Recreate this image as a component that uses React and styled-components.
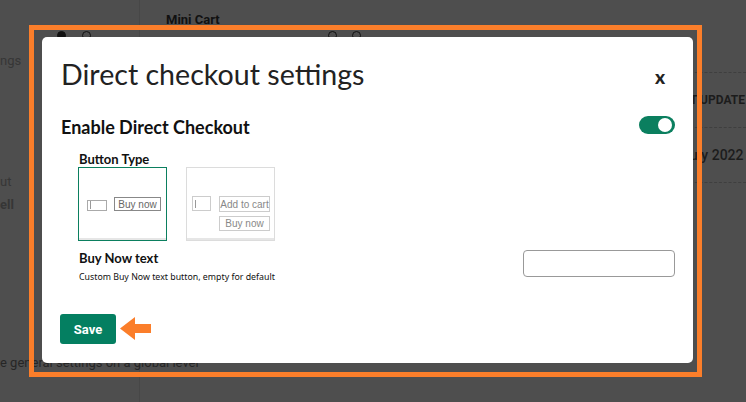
import styled, { createGlobalStyle } from 'styled-components'

const GlobalStyle = createGlobalStyle`
  html, body {
    margin: 0;
    padding: 0;
    background: #4e4e4e;
    overflow: hidden;
  }
  * { box-sizing: border-box; }
`

const Underlay = styled.div`
  display: grid;
  grid-template-columns: 140px 1fr 56px;
  height: 402px;
  width: 746px;
  font-family: Roboto, "Liberation Sans", sans-serif;
  color: #2a2a2a;
`

const LeftCol = styled.div`
  display: flex;
  flex-direction: column;
  padding-top: 31px;
  font-size: 13px;
  color: #333;
  border-right: 1px solid #474747;
`

const CutText = styled.div`
  margin-top: ${props => props.$top || 0}px;
  white-space: nowrap;
  font-weight: ${props => (props.$bold ? 700 : 400)};
  color: ${props => (props.$dark ? '#262626' : '#363636')};
`

const MidCol = styled.div`
  padding: 12px 0 0 26px;
`

const CartTitle = styled.div`
  font-size: 13px;
  font-weight: 700;
  color: #111;
`

const DotRow = styled.div`
  display: flex;
  gap: ${props => props.$gap}px;
  margin: ${props => props.$top}px 0 0 ${props => props.$left}px;
`

const Dot = styled.span`
  width: 9px;
  height: 9px;
  border-radius: 50%;
  border: 1.5px solid #111;
  background: ${props => (props.$filled ? '#111' : 'transparent')};
`

const RightCol = styled.div`
  display: flex;
  flex-direction: column;
  padding-top: 72px;
  overflow: hidden;
`

const DashedRow = styled.div`
  border-top: 1px dashed #3f3f3f;
  height: 55px;
  display: flex;
  align-items: center;
  font-size: ${props => props.$size || 12}px;
  font-weight: ${props => props.$weight || 700};
  color: #1c1c1c;
  white-space: nowrap;
`

const Overlay = styled.div`
  position: fixed;
  inset: 0;
  display: flex;
  align-items: flex-start;
  padding: 25px 0 0 29px;
`

const Frame = styled.div`
  width: 673px;
  height: 352px;
  border: 5px solid #fb7e2a;
  padding: 7px 4px 9px 8px;
`

const Modal = styled.div`
  width: 651px;
  height: 326px;
  background: #fff;
  border-radius: 5px;
  padding: 0 18px 0 19px;
  font-family: Lato, "Open Sans", sans-serif;
  color: #111;
`

const Header = styled.div`
  display: flex;
  justify-content: space-between;
  align-items: center;
  height: 72px;
  padding-top: 2px;
`

const Title = styled.h1`
  margin: 0;
  font-size: 28.6px;
  font-weight: 400;
  line-height: 32px;
  color: #222;
`

const Close = styled.span`
  font-size: 19px;
  font-weight: 900;
  color: #222;
  margin-right: 10px;
  margin-top: 4px;
`

const ToggleRow = styled.div`
  display: flex;
  justify-content: space-between;
  align-items: center;
  margin-top: 7px;
  height: 18px;
`

const SectionTitle = styled.div`
  font-size: 18px;
  font-weight: 700;
  margin-top: 3px;
`

const Toggle = styled.div`
  width: 36px;
  height: 18px;
  border-radius: 9px;
  background: #0b7f5f;
  display: flex;
  justify-content: flex-end;
  align-items: center;
  padding: 0 3px;
`

const Knob = styled.span`
  width: 14px;
  height: 14px;
  border-radius: 50%;
  background: #fff;
`

const Indent = styled.div`
  padding-left: 17px;
`

const Label = styled.div`
  font-size: 13px;
  font-weight: 700;
  line-height: 16px;
  margin-top: ${props => props.$top}px;
  padding-left: 1px;
`

const CardRow = styled.div`
  display: flex;
  gap: 19px;
`

const Card = styled.div`
  width: 89px;
  height: 74px;
  border: 1px solid ${props => (props.$active ? '#0b7f5f' : '#dcdcdc')};
  box-shadow: inset 0 -2px 0 #e6e6e6;
  display: flex;
  align-items: ${props => (props.$top ? 'flex-start' : 'center')};
  gap: ${props => props.$gap}px;
  padding-left: ${props => props.$pad}px;
  padding-top: ${props => props.$top || 0}px;
`

const MiniInput = styled.div`
  width: ${props => props.$w}px;
  height: ${props => props.$h}px;
  border: 1px solid ${props => props.$color};
  display: flex;
  align-items: center;
  padding-left: 2px;
  margin-top: ${props => props.$mt || 0}px;
`

const Caret = styled.span`
  width: 1px;
  height: 8px;
  background: #999;
`

const MiniStack = styled.div`
  display: flex;
  flex-direction: column;
  gap: 4px;
`

const MiniButton = styled.div`
  width: ${props => props.$w}px;
  height: ${props => props.$h}px;
  border: 1px solid ${props => props.$color};
  font-family: "Liberation Sans", Arial, sans-serif;
  font-size: 10px;
  color: ${props => props.$text};
  display: flex;
  align-items: center;
  justify-content: center;
`

const FieldRow = styled.div`
  display: flex;
  justify-content: space-between;
  align-items: flex-start;
`

const Hint = styled.div`
  font-family: "Noto Sans", sans-serif;
  font-size: 8.8px;
  margin-top: 5px;
  padding-left: 1px;
  color: #111;
`

const TextInput = styled.input`
  width: 152px;
  height: 27px;
  border: 1px solid #999;
  border-radius: 4px;
  margin-top: 9px;
  outline: none;
`

const Footer = styled.div`
  display: flex;
  align-items: center;
  gap: 4px;
  margin-top: 31px;
  margin-left: -1px;
`

const SaveButton = styled.button`
  width: 56px;
  height: 30px;
  border: none;
  border-radius: 3px;
  background: #047f61;
  color: #fff;
  font-family: Roboto, sans-serif;
  font-weight: 700;
  font-size: 13px;
`

function App() {
  return (
    <>
      <GlobalStyle />
      <Underlay>
        <LeftCol>
          <DotRow $left={57} $gap={16} $top={0}>
            <Dot $filled />
            <Dot />
          </DotRow>
          <CutText $top={13}>ngs</CutText>
          <CutText $top={106}>ut</CutText>
          <CutText $top={8} $bold>ell</CutText>
          <CutText $top={143} $dark>e general settings on a global level</CutText>
        </LeftCol>
        <MidCol>
          <CartTitle>Mini Cart</CartTitle>
          <DotRow $left={162} $gap={15} $top={4}>
            <Dot />
            <Dot />
          </DotRow>
        </MidCol>
        <RightCol>
          <DashedRow>T UPDATE</DashedRow>
          <DashedRow $size={14} $weight={500}>uly 2022</DashedRow>
          <DashedRow />
        </RightCol>
      </Underlay>
      <Overlay>
        <Frame>
          <Modal>
            <Header>
              <Title>Direct checkout settings</Title>
              <Close>x</Close>
            </Header>
            <ToggleRow>
              <SectionTitle>Enable Direct Checkout</SectionTitle>
              <Toggle>
                <Knob />
              </Toggle>
            </ToggleRow>
            <Indent>
              <Label $top={17}>Button Type</Label>
              <CardRow>
                <Card $active $pad={8} $gap={7}>
                  <MiniInput $w={20} $h={11} $color="#aaa" $mt={2}>
                    <Caret />
                  </MiniInput>
                  <MiniButton $w={47} $h={14} $color="#888" $text="#666">Buy now</MiniButton>
                </Card>
                <Card $pad={5} $gap={8} $top={28}>
                  <MiniInput $w={19} $h={15} $color="#ccc">
                    <Caret />
                  </MiniInput>
                  <MiniStack>
                    <MiniButton $w={51} $h={16} $color="#ccc" $text="#888">Add to cart</MiniButton>
                    <MiniButton $w={51} $h={15} $color="#ccc" $text="#888">Buy now</MiniButton>
                  </MiniStack>
                </Card>
              </CardRow>
              <FieldRow>
                <div>
                  <Label $top={9}>Buy Now text</Label>
                  <Hint>Custom Buy Now text button, empty for default</Hint>
                </div>
                <TextInput type="text" />
              </FieldRow>
            </Indent>
            <Footer>
              <SaveButton>Save</SaveButton>
              <svg width="32" height="24" viewBox="0 0 32 24">
                <polygon points="0,11.5 15,0 15,7 31,7 31,16 15,16 15,23" fill="#fb7e2a" />
              </svg>
            </Footer>
          </Modal>
        </Frame>
      </Overlay>
    </>
  )
}

export default App
